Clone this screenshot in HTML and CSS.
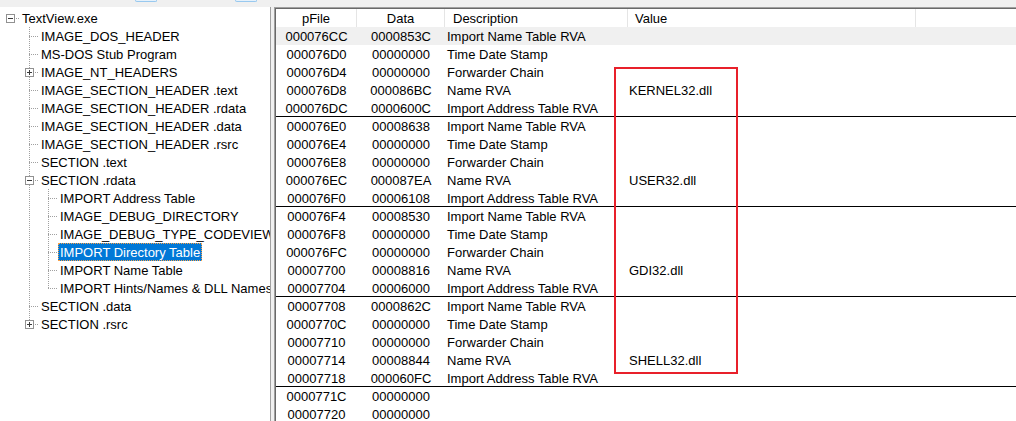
FILE: index.html
```html
<!DOCTYPE html>
<html>
<head>
<meta charset="utf-8">
<link rel="stylesheet" href="styles.css">
</head>
<body>
<div class="app">
  <div class="toolbar"><span class="stub s1"></span><span class="stub s2"></span></div>
  <div class="main">
    <div class="tree">
      <div class="node">
        <div class="row l0"><span class="ind"></span><span class="box minus"></span><span class="label">TextView.exe</span></div>
        <div class="kids k1">
          <div class="node"><div class="row l1"><span class="ind"></span><span class="nobox"></span><span class="label">IMAGE_DOS_HEADER</span></div></div>
          <div class="node"><div class="row l1"><span class="ind"></span><span class="nobox"></span><span class="label">MS-DOS Stub Program</span></div></div>
          <div class="node"><div class="row l1"><span class="ind"></span><span class="box plus"></span><span class="label">IMAGE_NT_HEADERS</span></div></div>
          <div class="node"><div class="row l1"><span class="ind"></span><span class="nobox"></span><span class="label">IMAGE_SECTION_HEADER .text</span></div></div>
          <div class="node"><div class="row l1"><span class="ind"></span><span class="nobox"></span><span class="label">IMAGE_SECTION_HEADER .rdata</span></div></div>
          <div class="node"><div class="row l1"><span class="ind"></span><span class="nobox"></span><span class="label">IMAGE_SECTION_HEADER .data</span></div></div>
          <div class="node"><div class="row l1"><span class="ind"></span><span class="nobox"></span><span class="label">IMAGE_SECTION_HEADER .rsrc</span></div></div>
          <div class="node"><div class="row l1"><span class="ind"></span><span class="nobox"></span><span class="label">SECTION .text</span></div></div>
          <div class="node">
            <div class="row l1"><span class="ind"></span><span class="box minus"></span><span class="label">SECTION .rdata</span></div>
            <div class="kids k2">
              <div class="node"><div class="row l2"><span class="ind"></span><span class="nobox"></span><span class="label">IMPORT Address Table</span></div></div>
              <div class="node"><div class="row l2"><span class="ind"></span><span class="nobox"></span><span class="label">IMAGE_DEBUG_DIRECTORY</span></div></div>
              <div class="node"><div class="row l2"><span class="ind"></span><span class="nobox"></span><span class="label">IMAGE_DEBUG_TYPE_CODEVIEW</span></div></div>
              <div class="node"><div class="row l2"><span class="ind"></span><span class="nobox"></span><span class="label selected">IMPORT Directory Table</span></div></div>
              <div class="node"><div class="row l2"><span class="ind"></span><span class="nobox"></span><span class="label">IMPORT Name Table</span></div></div>
              <div class="node last"><div class="row l2"><span class="ind"></span><span class="nobox"></span><span class="label">IMPORT Hints/Names &amp; DLL Names</span></div></div>
            </div>
          </div>
          <div class="node"><div class="row l1"><span class="ind"></span><span class="nobox"></span><span class="label">SECTION .data</span></div></div>
          <div class="node last"><div class="row l1"><span class="ind"></span><span class="box plus"></span><span class="label">SECTION .rsrc</span></div></div>
        </div>
      </div>
    </div>
    <div class="splitter"></div>
    <div class="list">
      <div class="lhead">
        <div class="hc center">pFile</div>
        <div class="hc center">Data</div>
        <div class="hc desc">Description</div>
        <div class="hc val">Value</div>
        <div class="hc last"></div>
      </div>
      <div class="lrow active"><div class="c center">000076CC</div><div class="c center">0000853C</div><div class="c desc">Import Name Table RVA</div><div class="c val"></div><div></div></div>
      <div class="lrow"><div class="c center">000076D0</div><div class="c center">00000000</div><div class="c desc">Time Date Stamp</div><div class="c val"></div><div></div></div>
      <div class="lrow"><div class="c center">000076D4</div><div class="c center">00000000</div><div class="c desc">Forwarder Chain</div><div class="c val"></div><div></div></div>
      <div class="lrow"><div class="c center">000076D8</div><div class="c center">000086BC</div><div class="c desc">Name RVA</div><div class="c val">KERNEL32.dll</div><div></div></div>
      <div class="lrow sep"><div class="c center">000076DC</div><div class="c center">0000600C</div><div class="c desc">Import Address Table RVA</div><div class="c val"></div><div></div></div>

      <div class="lrow"><div class="c center">000076E0</div><div class="c center">00008638</div><div class="c desc">Import Name Table RVA</div><div class="c val"></div><div></div></div>
      <div class="lrow"><div class="c center">000076E4</div><div class="c center">00000000</div><div class="c desc">Time Date Stamp</div><div class="c val"></div><div></div></div>
      <div class="lrow"><div class="c center">000076E8</div><div class="c center">00000000</div><div class="c desc">Forwarder Chain</div><div class="c val"></div><div></div></div>
      <div class="lrow"><div class="c center">000076EC</div><div class="c center">000087EA</div><div class="c desc">Name RVA</div><div class="c val">USER32.dll</div><div></div></div>
      <div class="lrow sep"><div class="c center">000076F0</div><div class="c center">00006108</div><div class="c desc">Import Address Table RVA</div><div class="c val"></div><div></div></div>

      <div class="lrow"><div class="c center">000076F4</div><div class="c center">00008530</div><div class="c desc">Import Name Table RVA</div><div class="c val"></div><div></div></div>
      <div class="lrow"><div class="c center">000076F8</div><div class="c center">00000000</div><div class="c desc">Time Date Stamp</div><div class="c val"></div><div></div></div>
      <div class="lrow"><div class="c center">000076FC</div><div class="c center">00000000</div><div class="c desc">Forwarder Chain</div><div class="c val"></div><div></div></div>
      <div class="lrow"><div class="c center">00007700</div><div class="c center">00008816</div><div class="c desc">Name RVA</div><div class="c val">GDI32.dll</div><div></div></div>
      <div class="lrow sep"><div class="c center">00007704</div><div class="c center">00006000</div><div class="c desc">Import Address Table RVA</div><div class="c val"></div><div></div></div>

      <div class="lrow"><div class="c center">00007708</div><div class="c center">0000862C</div><div class="c desc">Import Name Table RVA</div><div class="c val"></div><div></div></div>
      <div class="lrow"><div class="c center">0000770C</div><div class="c center">00000000</div><div class="c desc">Time Date Stamp</div><div class="c val"></div><div></div></div>
      <div class="lrow"><div class="c center">00007710</div><div class="c center">00000000</div><div class="c desc">Forwarder Chain</div><div class="c val"></div><div></div></div>
      <div class="lrow"><div class="c center">00007714</div><div class="c center">00008844</div><div class="c desc">Name RVA</div><div class="c val">SHELL32.dll</div><div></div></div>
      <div class="lrow sep"><div class="c center">00007718</div><div class="c center">000060FC</div><div class="c desc">Import Address Table RVA</div><div class="c val"></div><div></div></div>

      <div class="lrow"><div class="c center">0000771C</div><div class="c center">00000000</div><div class="c desc"></div><div class="c val"></div><div></div></div>
      <div class="lrow"><div class="c center">00007720</div><div class="c center">00000000</div><div class="c desc"></div><div class="c val"></div><div></div></div>

      <div class="redbox"></div>
    </div>
  </div>
</div>
</body>
</html>
```

FILE: styles.css
```css
html, body {
  margin: 0;
  padding: 0;
  background: #f0f0f0;
}
body {
  font-family: "Liberation Sans", Arial, sans-serif;
  font-size: 13px;
  color: #000;
  overflow: hidden;
}
.app {
  width: 1016px;
  height: 421px;
  display: flex;
  flex-direction: column;
  overflow: hidden;
}
.toolbar {
  height: 7px;
  flex: none;
  display: flex;
  align-items: flex-start;
  background: #f0f0f0;
}
.stub {
  display: block;
  width: 20px;
  height: 1px;
  background: #e5f1fb;
  border: 1px solid #99c9ef;
  border-top: none;
  border-radius: 0 0 2px 2px;
}
.s1 { margin-left: 135px; }
.s2 { margin-left: 78px; }

.main {
  flex: 1;
  display: flex;
  min-height: 0;
}

/* ---------- tree ---------- */
.tree {
  width: 271px;
  flex: none;
  box-sizing: border-box;
  background: #fff;
  border-right: 1px solid #a0a0a0;
  padding-top: 2px;
  overflow: hidden;
}
.node {
  background-repeat: no-repeat;
}
.k1 > .node {
  background-image: repeating-linear-gradient(to bottom, #a0a0a0 0 1px, transparent 1px 2px);
  background-size: 1px 100%;
  background-position: 29px 0;
}
.k1 > .node.last {
  background-size: 1px 9px;
}
.k2 > .node {
  background-image: repeating-linear-gradient(to bottom, #a0a0a0 0 1px, transparent 1px 2px);
  background-size: 1px 100%;
  background-position: 48px 0;
}
.k2 > .node.last {
  background-size: 1px 9px;
}
.row {
  height: 18px;
  display: flex;
  align-items: flex-start;
  white-space: nowrap;
  background-image: repeating-linear-gradient(to right, #a0a0a0 0 1px, transparent 1px 2px);
  background-repeat: no-repeat;
  background-size: 9px 1px;
}
.row.l0 { background-position: 10px 9px; }
.row.l1 { background-position: 29px 9px; }
.row.l2 { background-position: 48px 9px; }
.row .ind { flex: none; display: block; }
.row.l0 .ind { width: 6px; }
.row.l1 .ind { width: 25px; }
.row.l2 .ind { width: 44px; }
.box, .nobox {
  flex: none;
  display: block;
  width: 9px;
  height: 9px;
  box-sizing: border-box;
  margin-right: 5px;
  margin-top: 5px;
}
.box {
  border: 1px solid #919191;
  background-color: #fff;
  background-repeat: no-repeat;
}
.box.minus {
  background-image: linear-gradient(#3a3a3a, #3a3a3a);
  background-size: 5px 1px;
  background-position: 1px 3px;
}
.box.plus {
  background-image: linear-gradient(#3a3a3a, #3a3a3a), linear-gradient(#3a3a3a, #3a3a3a);
  background-size: 5px 1px, 1px 5px;
  background-position: 1px 3px, 3px 1px;
}
.label {
  display: block;
  height: 18px;
  line-height: 18px;
  box-sizing: border-box;
  padding: 0 1px;
  border: 1px solid transparent;
}
.label.selected {
  background: #0078d7;
  color: #fff;
  border: 1px dotted #f7a14a;
}

.splitter {
  width: 3px;
  flex: none;
  background: #f0f0f0;
}

/* ---------- list ---------- */
.list {
  flex: 1;
  position: relative;
  background: #fff;
  border-top: 1px solid #a0a0a0;
  border-left: 1px solid #a0a0a0;
  box-shadow: inset 1px 1px 0 #696969;
  padding-top: 1px;
  padding-left: 1px;
  overflow: hidden;
}
.lhead, .lrow {
  display: grid;
  grid-template-columns: 81px 88px 183px 288px 1fr;
  grid-template-rows: 18px;
  height: 18px;
  box-sizing: border-box;
  white-space: nowrap;
}
.lhead > div, .lrow > div {
  line-height: 20px;
}
.hc {
  border-right: 1px solid #e5e5e5;
  overflow: hidden;
}
.hc.last { border-right: none; }
.center { text-align: center; }
.hc.desc { padding-left: 8px; }
.hc.val { padding-left: 7px; }
.c.desc { padding-left: 2px; }
.c.val { padding-left: 1px; }
.lrow.active { background: #f0f0f0; }
.lrow.sep { border-bottom: 1px solid #000; grid-template-rows: 17px; }

.redbox {
  position: absolute;
  left: 339px;
  top: 59px;
  width: 124px;
  height: 307px;
  box-sizing: border-box;
  border: 2px solid #e8202a;
}
```
